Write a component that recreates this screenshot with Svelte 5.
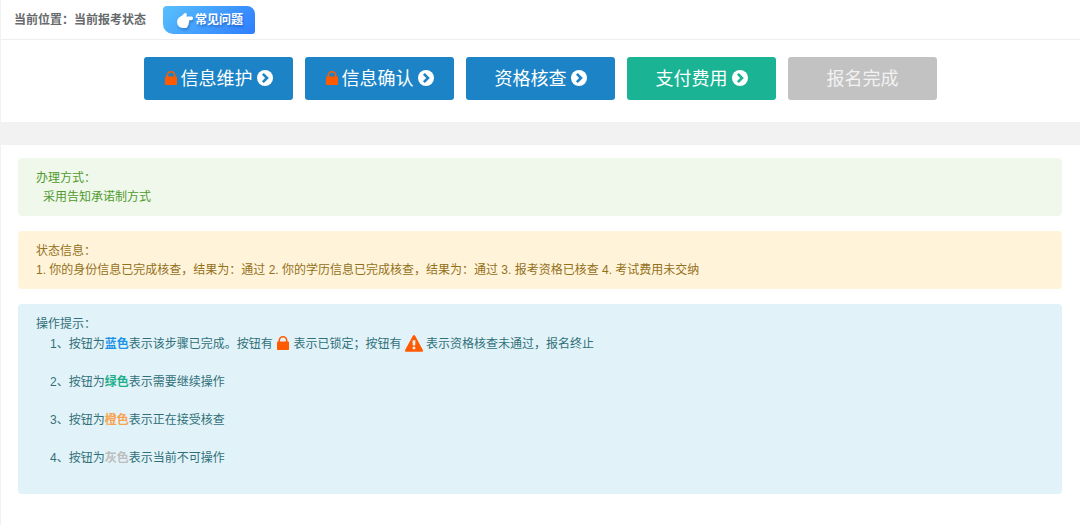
<script>
  const steps = [
    { label: '信息维护', tone: 'blue', locked: true, arrow: true },
    { label: '信息确认', tone: 'blue', locked: true, arrow: true },
    { label: '资格核查', tone: 'blue', locked: false, arrow: true },
    { label: '支付费用', tone: 'green', locked: false, arrow: true },
    { label: '报名完成', tone: 'gray', locked: false, arrow: false }
  ];
</script>

{#snippet lock()}
  <svg class="lock" viewBox="0 0 12 14" aria-hidden="true">
    <path d="M.8 5.500h10.400q.8 0 .8.8v6.900q0 .8-.8.8H.8q-.8 0-.8-.8V6.300q0-.8.8-.8z" />
    <path class="shackle" d="M2.300 6.500V4.500a3.700 3.700 0 0 1 7.400 0V6.500" />
  </svg>
{/snippet}

<div class="page">
  <header>
    <span class="crumb">当前位置：当前报考状态</span>
    <a class="faq" href="#faq">
      <svg class="hand" viewBox="0 0 16 15" aria-hidden="true">
        <path d="M14.500 3.500H9.400C10.300 2.300 10 .1 8.400.1 7.300.1 6.600 1.400 5.200 2.400 2.700 3.900.1 5.200.1 9c0 3.700 2.400 5.900 5.800 5.900h2.800c1.500 0 2.200-1 2-2.200 1-.5 1.300-1.500.9-2.400.8-.8.9-2.100.3-3.100h2.600c1 0 1.500-.9 1.500-1.850s-.6-1.850-1.500-1.850z" />
      </svg>
      <span>常见问题</span>
    </a>
  </header>

  <nav aria-label="报考步骤">
    {#each steps as step}
      <button type="button" class={step.tone} disabled={step.tone === 'gray'}>
        {#if step.locked}{@render lock()}{/if}
        <span>{step.label}</span>
        {#if step.arrow}
          <svg class="arrow" viewBox="0 0 16 16" aria-hidden="true">
            <circle cx="8" cy="8" r="8" />
            <path d="M5.900 3.900L10 8l-4.100 4.100" />
          </svg>
        {/if}
      </button>
    {/each}
  </nav>

  <main>
    <section class="method">
      <p>办理方式：</p>
      <p class="indent">采用告知承诺制方式</p>
    </section>
    <section class="status">
      <p>状态信息：</p>
      <p>1. 你的身份信息已完成核查，结果为：通过 2. 你的学历信息已完成核查，结果为：通过 3. 报考资格已核查 4. 考试费用未交纳</p>
    </section>
    <section class="tips">
      <p>操作提示：</p>
      <div class="list">
        <p>1、按钮为<b class="t-blue">蓝色</b>表示该步骤已完成。按钮有 {@render lock()} 表示已锁定；按钮有 <svg class="warn" viewBox="0 0 1792 1664" aria-hidden="true"><path d="M1024 1375v-190q0-14-9.500-23.500t-22.500-9.500h-192q-13 0-22.500 9.500t-9.500 23.500v190q0 14 9.500 23.500t22.500 9.500h192q13 0 22.500-9.500t9.500-23.500zm-2-374l18-459q0-12-10-19-13-11-24-11h-220q-11 0-24 11-10 7-10 21l17 457q0 10 10 16.500t24 6.500h185q14 0 23.500-6.500t10.500-16.500zm-14-934l768 1408q35 63-2 126-17 29-46.500 46t-63.500 17h-1536q-34 0-63.500-17t-46.500-46q-37-63-2-126l768-1408q17-31 47-49t65-18 65 18 47 49z" /></svg> 表示资格核查未通过，报名终止</p>
        <p>2、按钮为<b class="t-green">绿色</b>表示需要继续操作</p>
        <p>3、按钮为<b class="t-orange">橙色</b>表示正在接受核查</p>
        <p>4、按钮为<b class="t-gray">灰色</b>表示当前不可操作</p>
      </div>
    </section>
  </main>
</div>

<style>
  :global(body) {
    margin: 0;
    background: #fff;
  }
  .page {
    border-left: 1px solid #f2f2f2;
    font-family: "Liberation Sans", "Noto Sans CJK SC", sans-serif;
    font-size: 12px;
    line-height: 19px;
  }
  header {
    display: flex;
    align-items: center;
    gap: 17px;
    padding: 6px 13px 5px;
    border-bottom: 1px solid #eee;
  }
  .crumb {
    color: #676a6c;
    font-weight: 700;
  }
  .faq {
    display: flex;
    align-items: center;
    gap: 2px;
    padding: 5px 12px 4px 14px;
    border-radius: 4px 8px 3px 10px;
    background: linear-gradient(135deg, #58c0fc, #2e7dff);
    color: #fff;
    font-weight: 700;
    text-decoration: none;
    text-shadow: 1px 2px 2px rgba(0, 40, 120, 0.35);
  }
  .hand {
    width: 16px;
    height: 15px;
    fill: #fff;
    filter: drop-shadow(1px 2px 1px rgba(0, 40, 120, 0.3));
  }
  nav {
    display: flex;
    justify-content: center;
    gap: 12px;
    padding: 17px 12px 22px;
    border-bottom: 23px solid #f2f2f2;
  }
  button {
    display: flex;
    align-items: center;
    justify-content: center;
    gap: 4px;
    width: 149px;
    height: 43px;
    padding: 0;
    border: 0;
    border-radius: 3px;
    color: #fff;
    font-family: inherit;
    font-size: 18px;
    line-height: 24px;
    cursor: pointer;
  }
  button svg {
    margin-bottom: 2px;
  }
  .blue {
    background: #1c84c6;
  }
  .green {
    background: #1ab394;
  }
  .gray {
    background: #c2c2c2;
    color: #f2f2f2;
    cursor: default;
  }
  .arrow {
    width: 16px;
    height: 16px;
    fill: #fff;
  }
  .arrow path {
    fill: none;
    stroke: #1c84c6;
    stroke-width: 2.6;
  }
  .green .arrow path {
    stroke: #1ab394;
  }
  .lock {
    width: 12px;
    height: 14px;
    fill: #ff5a00;
  }
  .shackle {
    fill: none;
    stroke: #ff5a00;
    stroke-width: 1.6;
  }
  main {
    display: flex;
    flex-direction: column;
    gap: 15px;
    padding: 13px 18px 32px 17px;
  }
  section {
    padding: 11px 18px 9px;
    border-radius: 4px;
  }
  p {
    margin: 0;
  }
  .indent {
    padding-left: 7px;
  }
  .method {
    background: #f0f8ec;
    color: #4f9a2e;
  }
  .status {
    background: #fff4da;
    color: #93701a;
  }
  .tips {
    padding-bottom: 26px;
    background: #e1f3f8;
    color: #31707a;
  }
  .list {
    display: flex;
    flex-direction: column;
    gap: 19px;
    padding: 1px 0 0 14px;
  }
  .list .lock {
    margin: -4px 1px;
    vertical-align: 4px;
  }
  .warn {
    width: 18px;
    height: 17px;
    margin: -4px 0;
    fill: #ff5a00;
    vertical-align: 2px;
  }
  .list .lock,
  .warn {
    margin-bottom: -6px;
  }
  .t-blue {
    color: #1a92ea;
  }
  .t-green {
    color: #1fae8c;
  }
  .t-orange {
    color: #f8a34f;
  }
  .t-gray {
    color: #bdbdbd;
  }
</style>
